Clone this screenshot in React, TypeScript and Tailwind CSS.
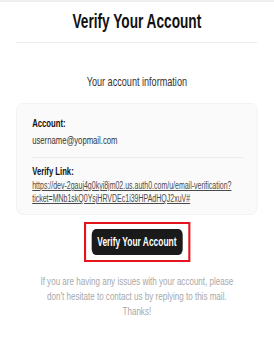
export default function App() {
  return (
    <div className="w-[274px] min-h-screen overflow-hidden bg-white border-t-2 border-[#efefef]">
      {/* the email is rendered wide and squeezed horizontally, like the reference capture */}
      <div className="w-[391px] origin-top-left scale-x-[0.7] font-['Liberation_Sans',Arial,sans-serif] text-[#222]">
        <h1 className="pt-[7px] text-center text-[19.5px] font-bold leading-[24px] text-[#111]">
          Verify Your Account
        </h1>
        <div className="mx-[23px] mt-[9px] border-t border-[#ededed]" />
        <p className="mt-[31px] text-center text-[13px] leading-[16px] text-[#333]">Your account information</p>
        <div className="mx-[23px] mt-[13px] rounded-[9px] border border-[#f0f0f0] bg-[#fafafa] pl-[22px] pr-[20px] pt-[12px] pb-[9px]">
          <div className="text-[11px] font-bold leading-[14px] text-[#111]">Account:</div>
          <div className="mt-[3px] text-[11px] leading-[14px] text-[#333]">username@yopmail.com</div>
          <div className="mt-[10px] border-t border-[#ececec]" />
          <div className="mt-[6px] text-[11px] font-bold leading-[14px] text-[#111]">Verify Link:</div>
          <a href="#" className="mt-[1px] block whitespace-nowrap text-[10px] leading-[13px] text-[#4a4a4a] underline">
            https://dev-2gauj4g0kyi8jm02.us.auth0.com/u/email-verification?
            <br />
            ticket=MNb1skQ0YsjHRVDEc1i39HPAdHQJ2xuV#
          </a>
        </div>
        <div className="mt-[7px] flex justify-center">
          <div className="border-x-[3px] border-y-2 border-[#e3141b] px-[8px] py-[5px]">
            <button className="h-[26px] w-[130px] rounded-[6px] bg-[#1a1a1a] text-[12px] font-bold text-white">
              Verify Your Account
            </button>
          </div>
        </div>
        <p className="mt-[12px] text-center text-[11.5px] leading-[15px] text-[#a8a8a8]">
          If you are having any issues with your account, please
          <br />
          don't hesitate to contact us by replying to this mail.
          <br />
          Thanks!
        </p>
      </div>
    </div>
  );
}
